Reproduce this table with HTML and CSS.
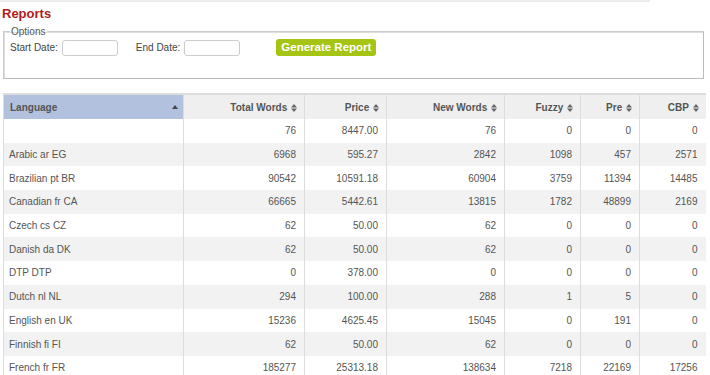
FILE: index.html
```html
<!DOCTYPE html>
<html lang="en">
<head>
  <meta charset="UTF-8">
  <title>Reports</title>
  <link rel="stylesheet" href="styles.css">
</head>
<body>
  <div class="topbar"></div>
  <h1>Reports</h1>

  <fieldset class="options">
    <legend>Options</legend>
    <div class="option-row">
      <label for="startDate">Start Date:</label>
      <input type="text" id="startDate" class="date-input">
      <label for="endDate" class="end-label">End Date:</label>
      <input type="text" id="endDate" class="date-input">
      <button class="generate-button">Generate Report</button>
    </div>
  </fieldset>

  <table class="report">
    <colgroup>
      <col style="width:180px">
      <col style="width:121px">
      <col style="width:82px">
      <col style="width:118px">
      <col style="width:76px">
      <col style="width:59px">
      <col style="width:66px">
    </colgroup>
    <thead>
      <tr>
        <th class="sorted">Language <svg class="sort-up" width="6" height="4" viewBox="0 0 6 4"><path d="M0 4 L3 0 L6 4 Z"/></svg></th>
        <th>Total Words <svg class="sort" width="6" height="8" viewBox="0 0 6 8"><path d="M0 3.5 L3 0 L6 3.5 Z M0 4.5 L3 8 L6 4.5 Z"/></svg></th>
        <th>Price <svg class="sort" width="6" height="8" viewBox="0 0 6 8"><path d="M0 3.5 L3 0 L6 3.5 Z M0 4.5 L3 8 L6 4.5 Z"/></svg></th>
        <th>New Words <svg class="sort" width="6" height="8" viewBox="0 0 6 8"><path d="M0 3.5 L3 0 L6 3.5 Z M0 4.5 L3 8 L6 4.5 Z"/></svg></th>
        <th>Fuzzy <svg class="sort" width="6" height="8" viewBox="0 0 6 8"><path d="M0 3.5 L3 0 L6 3.5 Z M0 4.5 L3 8 L6 4.5 Z"/></svg></th>
        <th>Pre <svg class="sort" width="6" height="8" viewBox="0 0 6 8"><path d="M0 3.5 L3 0 L6 3.5 Z M0 4.5 L3 8 L6 4.5 Z"/></svg></th>
        <th>CBP <svg class="sort" width="6" height="8" viewBox="0 0 6 8"><path d="M0 3.5 L3 0 L6 3.5 Z M0 4.5 L3 8 L6 4.5 Z"/></svg></th>
      </tr>
    </thead>
    <tbody>
      <tr><td></td><td>76</td><td>8447.00</td><td>76</td><td>0</td><td>0</td><td>0</td></tr>
      <tr><td>Arabic ar EG</td><td>6968</td><td>595.27</td><td>2842</td><td>1098</td><td>457</td><td>2571</td></tr>
      <tr><td>Brazilian pt BR</td><td>90542</td><td>10591.18</td><td>60904</td><td>3759</td><td>11394</td><td>14485</td></tr>
      <tr><td>Canadian fr CA</td><td>66665</td><td>5442.61</td><td>13815</td><td>1782</td><td>48899</td><td>2169</td></tr>
      <tr><td>Czech cs CZ</td><td>62</td><td>50.00</td><td>62</td><td>0</td><td>0</td><td>0</td></tr>
      <tr><td>Danish da DK</td><td>62</td><td>50.00</td><td>62</td><td>0</td><td>0</td><td>0</td></tr>
      <tr><td>DTP DTP</td><td>0</td><td>378.00</td><td>0</td><td>0</td><td>0</td><td>0</td></tr>
      <tr><td>Dutch nl NL</td><td>294</td><td>100.00</td><td>288</td><td>1</td><td>5</td><td>0</td></tr>
      <tr><td>English en UK</td><td>15236</td><td>4625.45</td><td>15045</td><td>0</td><td>191</td><td>0</td></tr>
      <tr><td>Finnish fi FI</td><td>62</td><td>50.00</td><td>62</td><td>0</td><td>0</td><td>0</td></tr>
      <tr><td>French fr FR</td><td>185277</td><td>25313.18</td><td>138634</td><td>7218</td><td>22169</td><td>17256</td></tr>
    </tbody>
  </table>
</body>
</html>
```

FILE: styles.css
```css
body {
  font-family: 'Liberation Sans', Arial, sans-serif;
  margin: 0;
  padding: 0;
  background: #fff;
  color: #333;
  font-size: 10px;
}
.topbar {
  width: 650px;
  height: 0;
  border-bottom: 2px solid #ececec;
}
h1 {
  font-size: 13px;
  color: #b31b1b;
  margin: 4px 0 0 2px;
  line-height: 16px;
}
.options {
  margin: 4px 6px 0 3px;
  padding: 0 6px 0 6px;
  height: 53px;
  box-sizing: border-box;
  border: 1px solid #bbb;
  border-top-color: #ccc;
  border-left-color: #ccc;
  box-shadow: inset 1px 1px 0 #ddd;
}
.options legend {
  padding: 0 2px 0 1px;
  color: #555;
  font-size: 10px;
}
.option-row {
  display: flex;
  align-items: center;
  margin-top: 2px;
}
.option-row label {
  color: #444;
  margin-right: 4px;
}
.option-row .end-label {
  margin-left: 18px;
}
.date-input {
  width: 56px;
  height: 16px;
  box-sizing: border-box;
  border: 1px solid #ccc;
  border-radius: 3px;
  padding: 0 3px;
  font-size: 10px;
}
.generate-button {
  margin-left: 36px;
  background-color: #a6c414;
  color: #fff;
  border: none;
  border-radius: 3px;
  font-family: 'Liberation Sans', Arial, sans-serif;
  font-weight: bold;
  font-size: 11.5px;
  padding: 0 5px;
  height: 17px;
  line-height: 17px;
}
.report {
  margin: 14px 0 0 3px;
  width: 702px;
  table-layout: fixed;
  border-collapse: collapse;
  border-top: 2px solid #ddd;
  color: #555;
}
.report th {
  background: #efefef;
  height: 24px;
  text-align: right;
  padding: 0 7px 0 5px;
  font-size: 10px;
  font-weight: bold;
  color: #555;
  border-left: 1px solid #ddd;
  white-space: nowrap;
}
.report th.sorted {
  background: #b2c1dd;
  text-align: left;
  position: relative;
  padding-left: 6px;
}
.report th svg {
  fill: #666;
  vertical-align: -1px;
  margin-left: 1px;
}
.report th svg.sort-up {
  position: absolute;
  right: 5px;
  top: 10px;
  fill: #444;
}
.report td {
  height: 23.7px;
  padding: 0 8px 0 5px;
  text-align: right;
  border-left: 1px solid #ddd;
  white-space: nowrap;
}
.report td:first-child {
  text-align: left;
}
.report tbody tr:nth-child(even) {
  background: #f2f2f2;
}
```
